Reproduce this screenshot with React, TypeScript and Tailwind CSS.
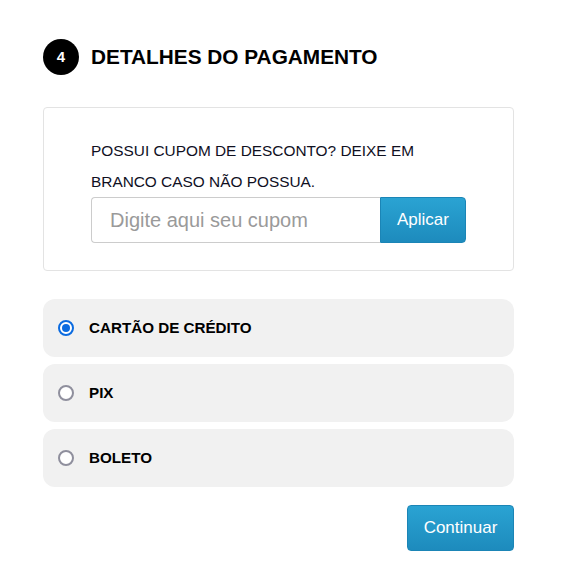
import { useState } from "react";

const methods = [
  { id: "cartao", label: "CARTÃO DE CRÉDITO" },
  { id: "pix", label: "PIX" },
  { id: "boleto", label: "BOLETO" },
];

export default function App() {
  const [method, setMethod] = useState("cartao");
  const [cupom, setCupom] = useState("");

  return (
    <div className="min-h-screen bg-white font-['Liberation_Sans',Arial,sans-serif] pl-[43px] pr-[47px] pt-[39px]">
      {/* Header */}
      <div className="flex items-center gap-3">
        <span className="w-9 h-9 rounded-full bg-black text-white text-[15px] font-bold flex items-center justify-center">
          4
        </span>
        <h2 className="text-[20.8px] font-bold text-black">DETALHES DO PAGAMENTO</h2>
      </div>

      {/* Cupom */}
      <div className="mt-[32px] border border-[#e3e3e3] rounded-[4px] pl-[47px] pt-[27px] pb-[27px]">
        <p className="w-[375px] text-[15.4px] leading-[31px] text-[#10101f]">
          POSSUI CUPOM DE DESCONTO? DEIXE EM BRANCO CASO NÃO POSSUA.
        </p>
        <div className="flex h-[46px] w-[375px]">
          <input
            value={cupom}
            onChange={(e) => setCupom(e.target.value)}
            placeholder="Digite aqui seu cupom"
            className="w-[289px] h-full border border-[#cccccc] border-r-0 rounded-l-[4px] pl-[18px] text-[20px] text-[#555] placeholder:text-[#9a9a9a] outline-none"
          />
          <button className="w-[86px] h-full rounded-r-[4px] bg-gradient-to-b from-[#2aa3d3] to-[#1d8bbd] border border-[#1b85b6] text-white text-[17px]">
            Aplicar
          </button>
        </div>
      </div>

      {/* Formas de pagamento */}
      <div className="mt-[28px] flex flex-col gap-[7px]">
        {methods.map((m) => {
          const checked = method === m.id;
          return (
            <label
              key={m.id}
              className="h-[58px] rounded-[12px] bg-[#f1f1f1] flex items-center pl-[15px] gap-[15px] cursor-pointer"
            >
              <input
                type="radio"
                name="pagamento"
                checked={checked}
                onChange={() => setMethod(m.id)}
                className="sr-only"
              />
              <span
                className={
                  checked
                    ? "w-4 h-4 rounded-full border-2 border-[#0b6be0] bg-white flex items-center justify-center"
                    : "w-4 h-4 rounded-full border-2 border-[#8f8f9d] bg-white"
                }
              >
                {checked && <span className="w-2 h-2 rounded-full bg-[#0b6be0]" />}
              </span>
              <span className="text-[15.2px] font-bold text-black">{m.label}</span>
            </label>
          );
        })}
      </div>

      <div className="flex justify-end mt-[18px]">
        <button className="w-[107px] h-[46px] rounded-[4px] bg-gradient-to-b from-[#2aa3d3] to-[#1d8bbd] border border-[#1b85b6] text-white text-[17px]">
          Continuar
        </button>
      </div>
    </div>
  );
}
